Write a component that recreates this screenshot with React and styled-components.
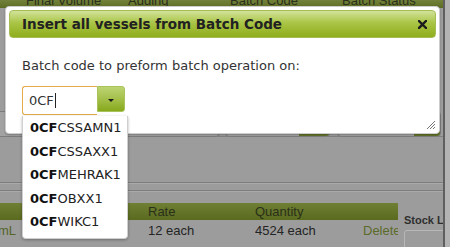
import React from 'react'
import styled, { createGlobalStyle } from 'styled-components'

const GlobalStyle = createGlobalStyle`
  html, body { margin: 0; padding: 0; }
  body {
    font-family: 'DejaVu Sans', Verdana, sans-serif;
    background: #9c9c9c;
  }
`

const Screen = styled.div`
  position: relative;
  width: 450px;
  height: 247px;
  overflow: hidden;
  display: flex;
  background: #9c9c9c;
`

const Page = styled.div`
  width: 443px;
  display: flex;
  flex-direction: column;
  overflow: hidden;
`

const Edge = styled.div`
  flex: 1;
  border-left: 2px solid #5f5f5f;
  background: #b3b3b3;
`

const HeaderStrip = styled.div`
  height: 8px;
  flex-shrink: 0;
  background: linear-gradient(#73823a, #5e6d24);
  position: relative;
  overflow: hidden;
  font-family: 'Liberation Sans', Arial, sans-serif;
  font-size: 13px;
  line-height: 15px;
  color: #2b2f1c;
`

const HeaderCol = styled.span`
  position: absolute;
  top: -7px;
  left: ${(p) => p.$x}px;
  white-space: nowrap;
`

const FieldRow = styled.div`
  height: 128px;
  flex-shrink: 0;
  display: flex;
  align-items: flex-end;
  gap: 6px;
  border-bottom: 1px solid #808080;
`

const Field = styled.div`
  height: 26px;
  width: ${(p) => p.$w}px;
  margin-left: ${(p) => p.$ml || 0}px;
  margin-bottom: -1px;
  box-sizing: border-box;
  border: 1px solid #7c7c7c;
  border-radius: 4px;
  background: #a2a2a2;
  display: flex;
  justify-content: flex-end;
  overflow: hidden;
`

const FieldBtn = styled.div`
  width: ${(p) => p.$w}px;
  background: linear-gradient(#7c8c3c, #62732a);
`

const Divider = styled.div`
  height: 1px;
  flex-shrink: 0;
  background: #7d7d7d;
  margin-top: ${(p) => p.$mt}px;
  border-bottom: 1px solid #aaaaaa;
`

const TableArea = styled.div`
  margin-top: 11px;
  display: flex;
  gap: 6px;
`

const Table = styled.div`
  width: 398px;
  flex-shrink: 0;
  border-bottom: 2px solid #7a7a7a;
  font-family: 'Liberation Sans', Arial, sans-serif;
  font-size: 13px;
  color: #242424;
`

const Row = styled.div`
  display: grid;
  grid-template-columns: 148px 107px 108px 35px;
  height: ${(p) => (p.$head ? 17 : 21)}px;
  align-items: center;
  background: ${(p) => (p.$head ? 'linear-gradient(#6f7f34, #5a6a1e)' : 'transparent')};
  color: ${(p) => (p.$head ? '#2a301a' : '#242424')};
`

const Cell = styled.span`
  white-space: nowrap;
  overflow: hidden;
  color: ${(p) => p.$color || 'inherit'};
  margin-left: ${(p) => p.$ml || 0}px;
`

const StockCol = styled.div`
  display: flex;
  flex-direction: column;
  padding-top: 10px;
  min-width: 60px;
`

const StockLabel = styled.div`
  font-family: 'Liberation Sans', Arial, sans-serif;
  font-weight: bold;
  font-size: 11px;
  color: #2f2f2f;
  white-space: nowrap;
  line-height: 14px;
`

const StockInput = styled.div`
  margin-top: 3px;
  width: 50px;
  height: 22px;
  border: 1px solid #b8b8b8;
  border-radius: 3px;
`

/* modal dialog */

const Dialog = styled.div`
  position: absolute;
  left: 5px;
  top: 6px;
  width: 435px;
  height: 128px;
  box-sizing: border-box;
  border: 1px solid #cdcdcd;
  border-radius: 4px;
  background: #fff;
  padding: 3px;
  box-shadow: 0 1px 2px rgba(0, 0, 0, 0.25);
`

const TitleBar = styled.div`
  height: 28px;
  box-sizing: border-box;
  border: 1px solid #a5bd55;
  border-radius: 4px;
  background: linear-gradient(#d2e29a 0%, #aac546 45%, #8fad1d 100%);
  display: flex;
  align-items: center;
  justify-content: space-between;
  padding: 0 7px 0 12px;
`

const Title = styled.span`
  font-weight: bold;
  font-size: 13.5px;
  color: #222;
`

const CloseBtn = styled.span`
  display: flex;
  width: 12px;
  height: 12px;
  align-items: center;
  justify-content: center;
`

const Body = styled.div`
  padding: 20px 0 0 13px;
`

const Label = styled.div`
  font-size: 13px;
  line-height: 16px;
  color: #333;
`

const Combo = styled.div`
  position: relative;
  margin-top: 12px;
  display: flex;
  width: 103px;
`

const Input = styled.div`
  width: 75px;
  height: 29px;
  box-sizing: border-box;
  border: 1px solid #e4aa4c;
  border-right: none;
  border-radius: 3px 0 0 3px;
  padding-left: 6px;
  display: flex;
  align-items: center;
  font-size: 13px;
  color: #333;
`

const Caret = styled.span`
  width: 1px;
  height: 15px;
  background: #222;
  margin-left: 1px;
`

const DropBtn = styled.div`
  width: 28px;
  height: 26px;
  box-sizing: border-box;
  border: 1px solid #a9c25a;
  border-radius: 0 3px 3px 0;
  background: linear-gradient(#bcd472 0%, #a4c04a 50%, #86a81c 100%);
  display: flex;
  align-items: center;
  justify-content: center;
`

const Triangle = styled.span`
  width: 0;
  height: 0;
  border-left: 3px solid transparent;
  border-right: 3px solid transparent;
  border-top: 3px solid #1a1a1a;
  margin-top: 2px;
`

const Menu = styled.ul`
  position: absolute;
  top: calc(100% + 1px);
  left: 0;
  width: 106px;
  box-sizing: border-box;
  margin: 0;
  padding: 0 0 4px;
  list-style: none;
  background: #fff;
  border: 1px solid #cfcfcf;
  border-top: none;
  border-radius: 0 0 4px 4px;
  box-shadow: 0 1px 3px rgba(0, 0, 0, 0.3);
  z-index: 2;
`

const Item = styled.li`
  height: 23.5px;
  line-height: 23.5px;
  padding-left: 7px;
  font-size: 13px;
  color: #222;
  white-space: nowrap;
  b {
    color: #111;
  }
`

const Grip = styled.svg`
  position: absolute;
  right: 3px;
  bottom: 3px;
`

const items = ['CSSAMN1', 'CSSAXX1', 'MEHRAK1', 'OBXX1', 'WIKC1']

const App = () => (
  <>
    <GlobalStyle />
    <Screen>
      <Page>
        <HeaderStrip>
          <HeaderCol $x={26}>Final Volume</HeaderCol>
          <HeaderCol $x={128}>Adding</HeaderCol>
          <HeaderCol $x={230}>Batch Code</HeaderCol>
          <HeaderCol $x={342}>Batch Status</HeaderCol>
        </HeaderStrip>
        <FieldRow>
          <Field $w={226} $ml={-6} />
          <Field $w={105} $ml={-1}>
            <FieldBtn $w={30} />
          </Field>
          <Field $w={104} $ml={1}>
            <FieldBtn $w={26} />
          </Field>
        </FieldRow>
        <Divider $mt={45} />
        <Divider $mt={6} />
        <TableArea>
          <Table>
            <Row $head>
              <Cell />
              <Cell>Rate</Cell>
              <Cell>Quantity</Cell>
              <Cell />
            </Row>
            <Row>
              <Cell $color="#55652a" $ml={-2}>mL</Cell>
              <Cell>12 each</Cell>
              <Cell>4524 each</Cell>
              <Cell $color="#5b6b2a">Delete</Cell>
            </Row>
          </Table>
          <StockCol>
            <StockLabel>Stock Level</StockLabel>
            <StockInput />
          </StockCol>
        </TableArea>
      </Page>
      <Edge />

      <Dialog>
        <TitleBar>
          <Title>Insert all vessels from Batch Code</Title>
          <CloseBtn>
            <svg width="9" height="9" viewBox="0 0 9 9">
              <path d="M1 1 L8 8 M8 1 L1 8" stroke="#1c1c1c" strokeWidth="2.4" strokeLinecap="square" />
            </svg>
          </CloseBtn>
        </TitleBar>
        <Body>
          <Label>Batch code to preform batch operation on:</Label>
          <Combo>
            <Input>
              0CF<Caret />
            </Input>
            <DropBtn>
              <Triangle />
            </DropBtn>
            <Menu>
              {items.map((rest) => (
                <Item key={rest}>
                  <b>0CF</b>
                  {rest}
                </Item>
              ))}
            </Menu>
          </Combo>
        </Body>
        <Grip width="10" height="10" viewBox="0 0 10 10">
          <path d="M9 1 L1 9 M9 4 L4 9 M9 7 L7 9" stroke="#777" strokeWidth="1" />
        </Grip>
      </Dialog>
    </Screen>
  </>
)

export default App
